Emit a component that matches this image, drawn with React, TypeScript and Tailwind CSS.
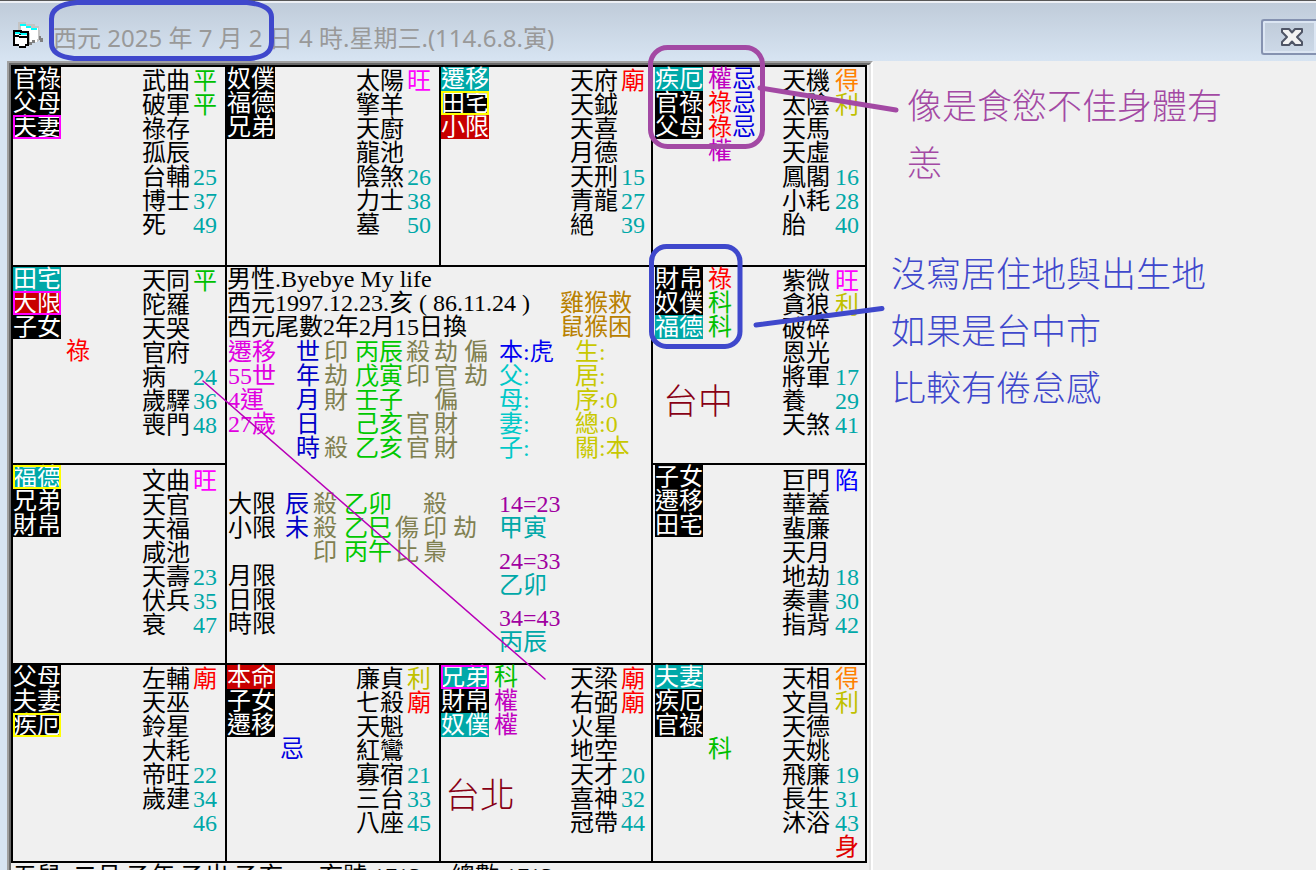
import React from "react";

type Tone = "black" | "teal" | "red";
type Frame = "magenta" | "yellow";
type Tag = { text: string; tone?: Tone; frame?: Frame };
type Mark = "祿" | "權" | "科" | "忌" | "";
type Star = { name: string; grade?: string; age?: number };
type Palace = {
  id: string;
  place: string;
  tags: Tag[];
  marks?: Mark[][];
  stars: Star[];
  body?: boolean;
  note?: { text: string; place: string };
};

const toneClass: Record<Tone, string> = {
  black: "bg-black",
  teal: "bg-[#00a8a8]",
  red: "bg-[#c80000]",
};

const frameClass: Record<Frame, string> = {
  magenta: "outline-2 -outline-offset-2 outline-[#ff00ff]",
  yellow: "outline-2 -outline-offset-2 outline-[#ffff00]",
};

const markClass: Record<string, string> = {
  祿: "text-[#ff0000]",
  權: "text-[#c000c0]",
  科: "text-[#00c000]",
  忌: "text-[#0000e0]",
};

const gradeClass: Record<string, string> = {
  平: "text-[#00c000]",
  旺: "text-[#ff00ff]",
  廟: "text-[#ff0000]",
  得: "text-[#ff8000]",
  利: "text-[#c0c000]",
  陷: "text-[#0000ff]",
};

const stars = (names: string, grades: string, firstAge: number): Star[] =>
  names.split(" ").map((name, i) => ({
    name: name === "-" ? "" : name,
    grade: grades[i],
    age: i >= 4 ? firstAge + (i - 4) * 12 : undefined,
  }));

const palaces: Palace[] = [
  {
    id: "si",
    place: "col-start-1 row-start-1",
    tags: [{ text: "官祿" }, { text: "父母" }, { text: "夫妻", frame: "magenta" }],
    stars: stars("武曲 破軍 祿存 孤辰 台輔 博士 死", "平平", 25),
  },
  {
    id: "wu",
    place: "col-start-2 row-start-1",
    tags: [{ text: "奴僕" }, { text: "福德" }, { text: "兄弟" }],
    stars: stars("太陽 擎羊 天廚 龍池 陰煞 力士 墓", "旺", 26),
  },
  {
    id: "wei",
    place: "col-start-3 row-start-1",
    tags: [
      { text: "遷移", tone: "teal" },
      { text: "田宅", frame: "yellow" },
      { text: "小限", tone: "red" },
    ],
    stars: stars("天府 天鉞 天喜 月德 天刑 青龍 絕", "廟", 15),
  },
  {
    id: "shen",
    place: "col-start-4 row-start-1",
    tags: [{ text: "疾厄", tone: "teal" }, { text: "官祿" }, { text: "父母" }],
    marks: [["權", "忌"], ["祿", "忌"], ["祿", "忌"], ["權"]],
    stars: stars("天機 太陰 天馬 天虛 鳳閣 小耗 胎", "得利", 16),
  },
  {
    id: "chen",
    place: "col-start-1 row-start-2",
    tags: [
      { text: "田宅", tone: "teal" },
      { text: "大限", tone: "red", frame: "magenta" },
      { text: "子女" },
    ],
    marks: [[""], [""], [""], ["祿"]],
    stars: stars("天同 陀羅 天哭 官府 病 歲驛 喪門", "平", 24),
  },
  {
    id: "you",
    place: "col-start-4 row-start-2",
    tags: [{ text: "財帛" }, { text: "奴僕" }, { text: "福德", tone: "teal" }],
    marks: [["祿"], ["科"], ["科"]],
    stars: stars("紫微 貪狼 破碎 恩光 將軍 養 天煞", "旺利", 17),
    note: { text: "台中", place: "top-27 left-2.5" },
  },
  {
    id: "mao",
    place: "col-start-1 row-start-3",
    tags: [{ text: "福德", tone: "teal", frame: "yellow" }, { text: "兄弟" }, { text: "財帛" }],
    stars: stars("文曲 天官 天福 咸池 天壽 伏兵 衰", "旺", 23),
  },
  {
    id: "xu",
    place: "col-start-4 row-start-3",
    tags: [{ text: "子女" }, { text: "遷移" }, { text: "田宅" }],
    stars: stars("巨門 華蓋 蜚廉 天月 地劫 奏書 指背", "陷", 18),
  },
  {
    id: "yin",
    place: "col-start-1 row-start-4",
    tags: [{ text: "父母" }, { text: "夫妻" }, { text: "疾厄", frame: "yellow" }],
    stars: stars("左輔 天巫 鈴星 大耗 帝旺 歲建 -", "廟", 22),
  },
  {
    id: "chou",
    place: "col-start-2 row-start-4",
    tags: [{ text: "本命", tone: "red" }, { text: "子女" }, { text: "遷移" }],
    marks: [[""], [""], [""], ["忌"]],
    stars: stars("廉貞 七殺 天魁 紅鸞 寡宿 三台 八座", "利廟", 21),
  },
  {
    id: "zi",
    place: "col-start-3 row-start-4",
    tags: [
      { text: "兄弟", tone: "teal", frame: "magenta" },
      { text: "財帛" },
      { text: "奴僕", tone: "teal" },
    ],
    marks: [["科"], ["權"], ["權"]],
    stars: stars("天梁 右弼 火星 地空 天才 喜神 冠帶", "廟廟", 20),
    note: { text: "台北", place: "top-26 left-1" },
  },
  {
    id: "hai",
    place: "col-start-4 row-start-4",
    tags: [{ text: "夫妻", tone: "teal" }, { text: "疾厄" }, { text: "官祿" }],
    marks: [[""], [""], [""], ["科"]],
    stars: stars("天相 文昌 天德 天姚 飛廉 長生 沐浴", "得利", 19),
    body: true,
  },
];

function PalaceCell({ palace }: { palace: Palace }) {
  const padTop = palace.place.includes("row-start-3") ? "pt-1" : "pt-0.5";
  const lastColumn = palace.place.includes("col-start-4");
  const columns = lastColumn ? "grid-cols-[129px_53px_auto]" : "grid-cols-[129px_51px_auto]";
  const lead = lastColumn ? "gap-[5px] pl-0.5" : "gap-[5px]";
  return (
    <section className={`relative grid content-start bg-[#f0f0f0] ${columns} ${palace.place}`}>
      <div className={`flex ${lead}`}>
        <ul className="w-12">
          {palace.tags.map((tag) => (
            <li
              key={tag.text}
              className={`h-6 text-white ${toneClass[tag.tone ?? "black"]} ${tag.frame ? frameClass[tag.frame] : ""}`}
            >
              {tag.text}
            </li>
          ))}
        </ul>
        <ul>
          {(palace.marks ?? []).map((row, i) => (
            <li key={i} className="flex h-6">
              {row.map((mark, j) => (
                <span key={j} className={`w-6 ${markClass[mark] ?? ""}`}>
                  {mark}
                </span>
              ))}
            </li>
          ))}
        </ul>
      </div>
      <ul className={padTop}>
        {palace.stars.map((star, i) => (
          <li key={i} className="h-6">
            {star.name}
          </li>
        ))}
      </ul>
      <ul className={padTop}>
        {palace.stars.map((star, i) => (
          <li key={i} className={`h-6 ${star.grade ? gradeClass[star.grade] : "text-[#00a8a8]"}`}>
            {star.grade ?? star.age}
          </li>
        ))}
        {palace.body && <li className="h-6 text-[#e00000]">身</li>}
      </ul>
      {palace.note && (
        <p
          className={`absolute font-['Noto_Sans_CJK_TC',sans-serif] text-[35px] leading-[48px] font-light text-[#880015] ${palace.note.place}`}
        >
          {palace.note.text}
        </p>
      )}
    </section>
  );
}

const pillars = [
  ["世", "印", "丙辰", "殺", "劫", "偏"],
  ["年", "劫", "戊寅", "印", "官", "劫"],
  ["月", "財", "壬子", "", "偏", ""],
  ["日", "", "己亥", "官", "財", ""],
  ["時", "殺", "乙亥", "官", "財", ""],
];

const limits = [
  ["辰", "殺", "乙卯", "", "殺", ""],
  ["未", "殺", "乙巳", "傷", "印", "劫"],
  ["", "印", "丙午", "比", "梟", ""],
];

const columnClass = [
  "w-[28px] text-[#0000c8]",
  "w-[31px] text-[#808050]",
  "w-[51px] text-[#00c800]",
  "w-[28px] text-[#808050]",
  "w-[30px] text-[#808050]",
  "w-[24px] text-[#808050]",
];

function PillarTable({ rows, label }: { rows: string[][]; label: string }) {
  return (
    <table aria-label={label} className="w-[192px] table-fixed self-start">
      <tbody>
        {rows.map((row, i) => (
          <tr key={i} className="h-6">
            {row.map((text, j) => (
              <td key={j} className={`p-0 ${columnClass[j]}`}>
                {text}
              </td>
            ))}
          </tr>
        ))}
      </tbody>
    </table>
  );
}

function Lines({ items, className }: { items: string[]; className: string }) {
  return (
    <ul className={className}>
      {items.map((text, i) => (
        <li key={i} className="h-6">
          {text}
        </li>
      ))}
    </ul>
  );
}

const decades = [
  ["14=23", "甲寅"],
  ["24=33", "乙卯"],
  ["34=43", "丙辰"],
];

function CentrePanel() {
  return (
    <section className="col-span-2 col-start-2 row-span-2 row-start-2 bg-[#f0f0f0]">
      <div className="flex justify-between pr-[19px]">
        <div>
          <h2>男性.Byebye My life</h2>
          <p>西元1997.12.23.亥 ( 86.11.24 )</p>
          <p>西元尾數2年2月15日換</p>
        </div>
        <Lines items={["雞猴救", "鼠猴困"]} className="pt-6 text-[#b88000]" />
      </div>
      <div className="flex pt-px">
        <Lines items={["遷移", "55世", "4運", "27歲"]} className="w-[69px] pl-px text-[#e000e0]" />
        <PillarTable rows={pillars} label="四柱" />
        <div className="w-[87px] pl-[11px]">
          <p className="text-[#0000f0]">本:虎</p>
          <Lines items={["父:", "母:", "妻:", "子:"]} className="text-[#00c8c8]" />
        </div>
        <Lines items={["生:", "居:", "序:0", "總:0", "關:本"]} className="text-[#c8c800]" />
      </div>
      <div className="flex pt-8">
        <Lines items={["大限", "小限", "", "月限", "日限", "時限"]} className="w-[58px] pl-px" />
        <PillarTable rows={limits} label="限運" />
        <dl className="flex flex-col gap-[9px] pl-[22px]">
          {decades.map(([range, stem]) => (
            <div key={range}>
              <dt className="text-[#a000a0]">{range}</dt>
              <dd className="text-[#00a8a8]">{stem}</dd>
            </div>
          ))}
        </dl>
      </div>
    </section>
  );
}

function FormIcon() {
  return (
    <svg width="32" height="28" viewBox="0 0 32 28" aria-hidden="true" shapeRendering="crispEdges">
      <path d="M5 0h8v2h9v2h4v4h1v9l-3 3H12V9H5z" fill="#c4c4c4" />
      <path d="M8 4h5v2h12v11h-1v3h-7V11h-3V9H8z" fill="#fff" />
      <path d="M7 2h6v2h5v2h6v2h-6V6h-5V4H7z" fill="#00ffff" />
      <path d="M16 20h3v-2h3v3h-3v2h-3zM26 14h2v2h2v4h-3v-2h-1z" fill="#808080" />
      <path d="M0 8h9v1h7v15h-3v2H6v-2H0z" fill="#000" />
      <path d="M2 12h4v1h8v9h-2v2H6v-2H2z" fill="#fff" />
      <path d="M2 10h5v1h7v2H8v-1H2z" fill="#00ffff" />
      <path d="M2 13h4v1h8v2H6v-1H2z" fill="#000" />
    </svg>
  );
}

function TitleBar() {
  return (
    <header className="flex h-[61px] shrink-0 items-start justify-between border-t border-[#585858] bg-linear-to-b from-[#bfcbd9] to-[#d7e4f2]">
      <div className="flex h-full flex-1 items-start border-t-2 border-[#edf0f5] pt-[19px] pl-[13px]">
        <FormIcon />
        <h1 className="pl-2 font-['Noto_Sans','Noto_Sans_CJK_TC',sans-serif] text-2xl leading-8 whitespace-nowrap text-[#999999]">
          西元 2025 年 7 月 2 日 4 時.星期三.(114.6.8.寅)
        </h1>
      </div>
      <div className="flex h-full items-start border-t-2 border-[#edf0f5] pt-4">
        <button
          type="button"
          aria-label="關閉"
          className="flex h-9 w-[55px] items-center justify-center rounded-l-[3px] border-2 border-r-0 border-[#8592b0] bg-linear-to-b from-[#bfcbd9] to-[#cdd9e8] pl-1 inset-ring-2 inset-ring-[#dce6f3]"
        >
          <svg width="24" height="20" viewBox="0 0 24 20" aria-hidden="true">
            <path
              d="M2 2h7l3 3.500 3-3.500h7v3l-5 5 5 5v3h-7l-3-3.500-3 3.500H2v-3l5-5-5-5z"
              fill="#f3f3f3"
              stroke="#4f5566"
              strokeWidth="2"
              strokeLinejoin="round"
            />
          </svg>
        </button>
      </div>
    </header>
  );
}

function Markup() {
  return (
    <svg
      width="920"
      height="700"
      viewBox="0 0 920 700"
      fill="none"
      strokeLinecap="round"
      aria-hidden="true"
      className="pointer-events-none absolute top-0 left-0"
    >
      <path d="M203 381L545 679" stroke="#b800b8" strokeWidth="1.500" />
      <path
        d="M77 2.500H247C262 4 271.500 9 271.500 17V42C271.500 53 264 57 250 58.500H74C60 57 51.500 52 51.500 43V19C51.500 9 60 4 77 2.500z"
        stroke="#3f48cc"
        strokeWidth="5"
      />
      <rect x="650.500" y="47.500" width="112" height="99" rx="17" stroke="#a349a4" strokeWidth="5" />
      <path d="M760 88L896 110" stroke="#a349a4" strokeWidth="5" />
      <rect x="651.500" y="246.500" width="88.500" height="100" rx="15" stroke="#3f48cc" strokeWidth="5" />
      <path d="M756 325L882 308.500" stroke="#3f48cc" strokeWidth="5" />
    </svg>
  );
}

export default function App() {
  return (
    <div className="relative flex h-screen flex-col overflow-hidden bg-[#f0f0f0] font-['Liberation_Serif','Noto_Sans_CJK_TC',serif] text-2xl leading-6 whitespace-nowrap text-black">
      <TitleBar />
      <main className="flex min-h-0 flex-1 items-stretch">
        <div className="w-[7px] shrink-0 bg-[#d7e4f2]" />
        <div className="shrink-0 border-t-2 border-r-2 border-l-2 border-t-[#a0a0a0] border-r-white border-l-[#a0a0a0]">
          <div className="h-full border-t-2 border-r-2 border-l-2 border-t-[#696969] border-r-[#e3e3e3] border-l-[#696969]">
            <div className="pr-0.5">
              <div className="grid grid-cols-[212px_212px_210px_212px] grid-rows-[198px_196px_198px_196px] gap-0.5 bg-black p-0.5">
                {palaces.map((palace) => (
                  <PalaceCell key={palace.id} palace={palace} />
                ))}
                <CentrePanel />
              </div>
              <p className="pt-px pl-0.5 whitespace-pre">
                {"五鼠. 二月.乙年.乙出.乙亥      亥號.1713     總數.1713"}
              </p>
            </div>
          </div>
        </div>
        <aside className="flex flex-col gap-[54px] pt-3.5 pl-[18px] font-['Noto_Sans_CJK_TC',sans-serif] text-[35px] leading-[57px] font-light">
          <p className="pl-4 text-[#a349a4]">
            像是食慾不佳身體有
            <br />
            恙
          </p>
          <p className="text-[#3f48cc]">
            沒寫居住地與出生地
            <br />
            如果是台中市
            <br />
            比較有倦怠感
          </p>
        </aside>
      </main>
      <Markup />
    </div>
  );
}
